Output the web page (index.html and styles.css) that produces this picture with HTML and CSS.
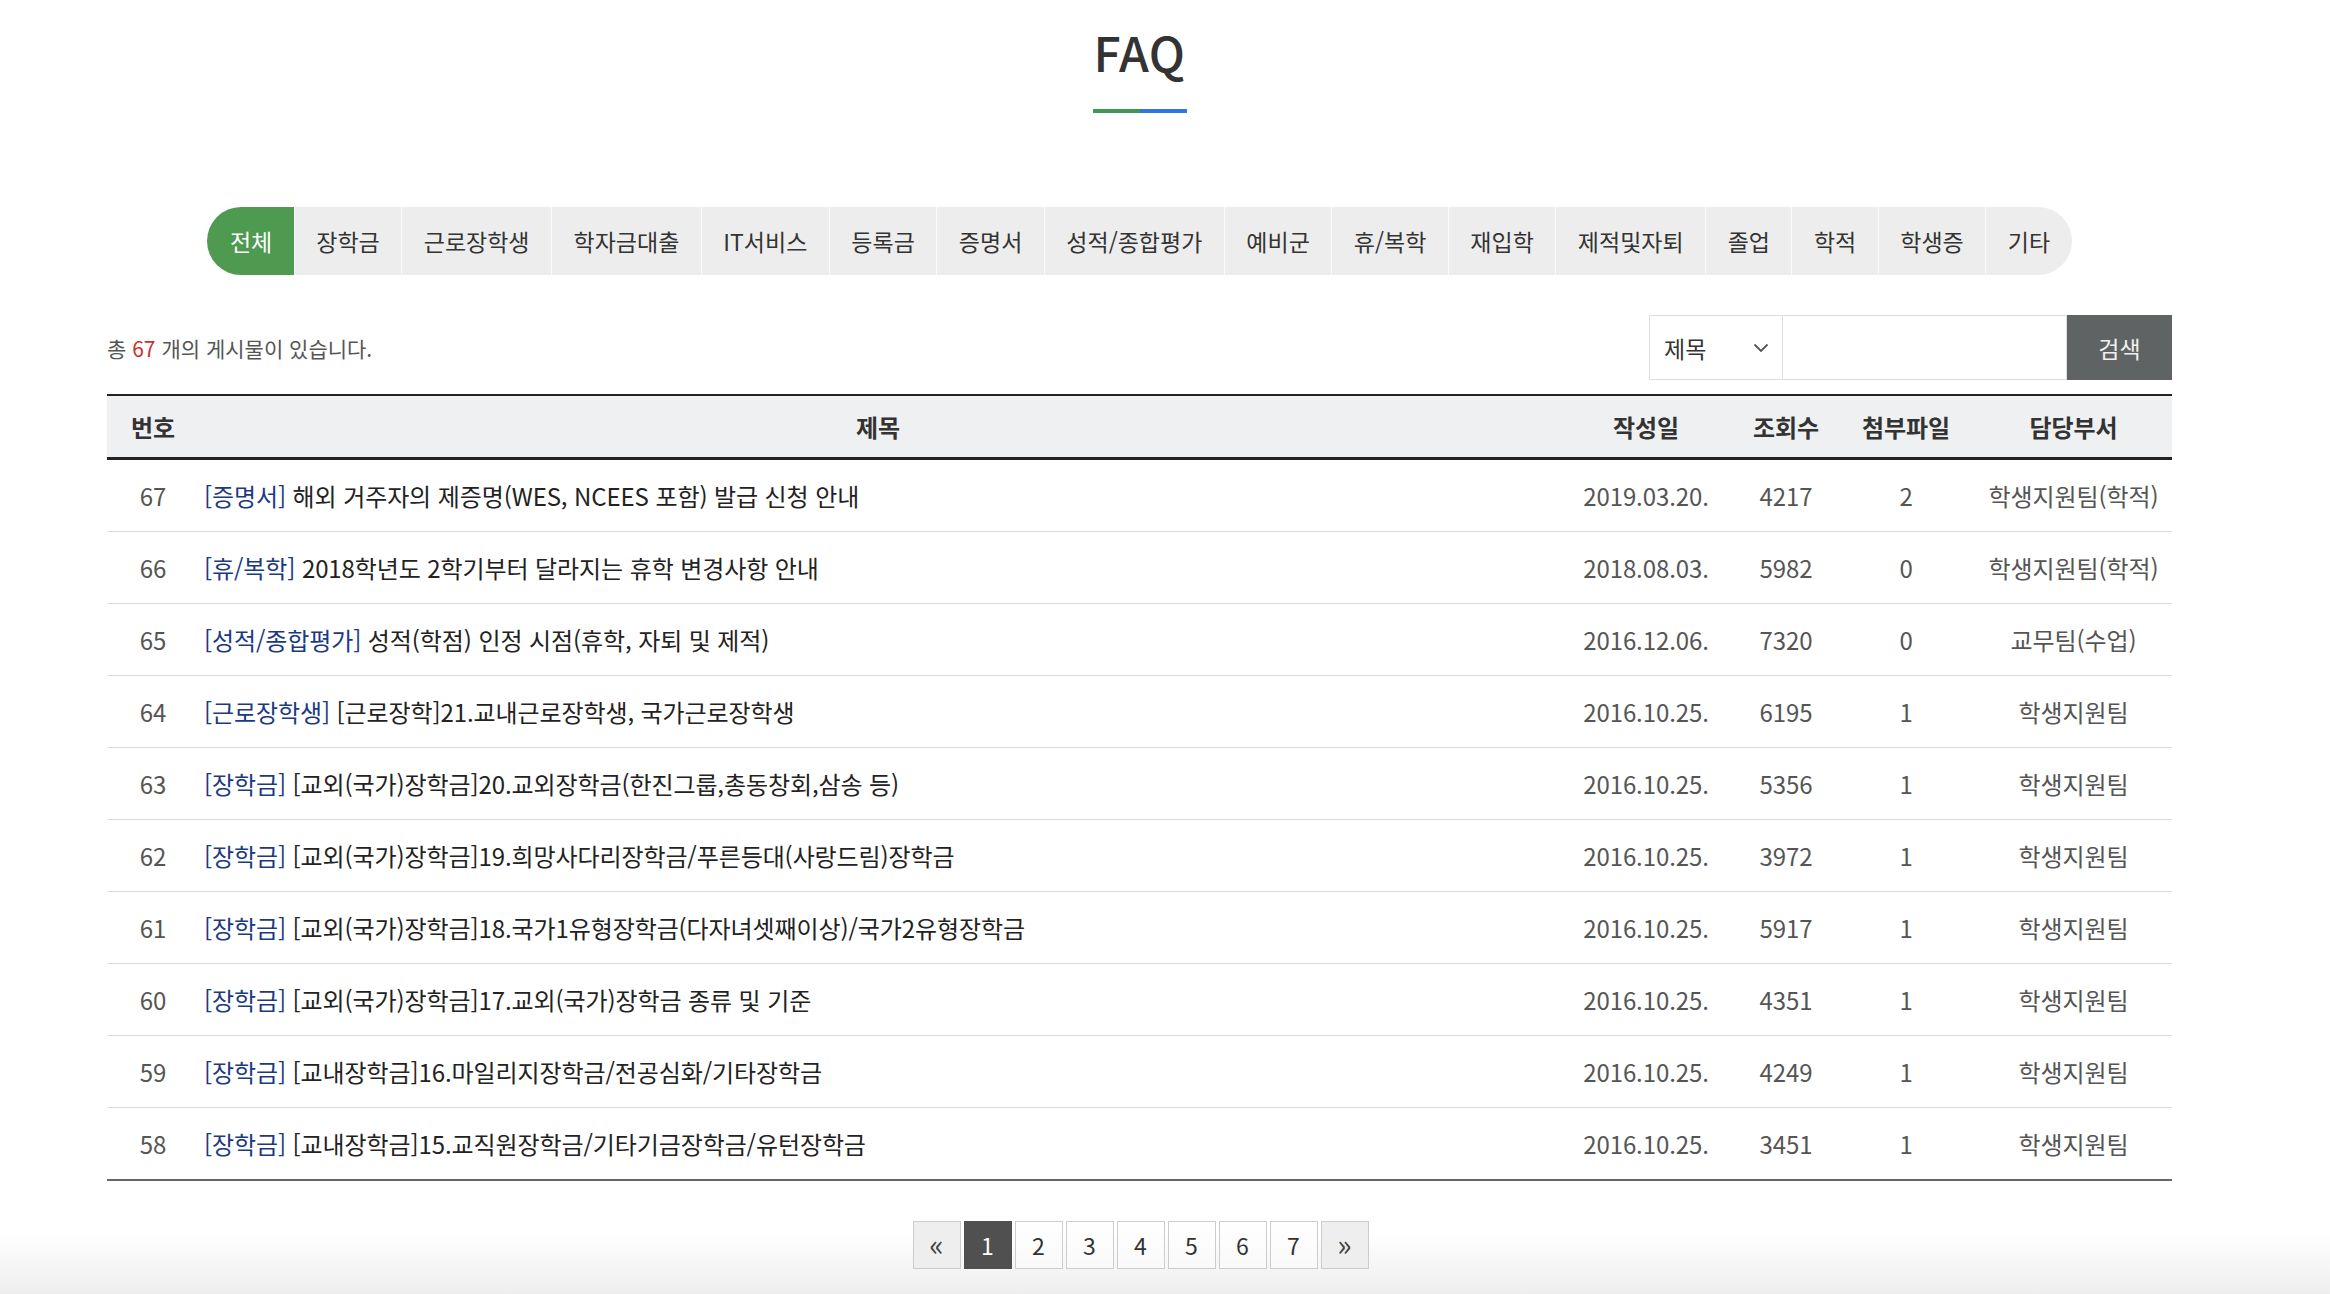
FILE: index.html
```html
<!DOCTYPE html>
<html lang="ko">
<head>
<meta charset="utf-8">
<title>FAQ</title>
<link rel="stylesheet" href="styles.css">
</head>
<body>
<div class="page">
  <header class="page-head">
    <h1 class="page-title">FAQ</h1>
    <div class="title-bar"><span class="bar-green"></span><span class="bar-blue"></span></div>
  </header>

  <nav class="tabs">
    <a class="tab active">전체</a>
    <a class="tab">장학금</a>
    <a class="tab">근로장학생</a>
    <a class="tab">학자금대출</a>
    <a class="tab">IT서비스</a>
    <a class="tab">등록금</a>
    <a class="tab">증명서</a>
    <a class="tab">성적/종합평가</a>
    <a class="tab">예비군</a>
    <a class="tab">휴/복학</a>
    <a class="tab">재입학</a>
    <a class="tab">제적및자퇴</a>
    <a class="tab">졸업</a>
    <a class="tab">학적</a>
    <a class="tab">학생증</a>
    <a class="tab">기타</a>
  </nav>

  <div class="toolbar">
    <p class="count">총 <strong>67</strong> 개의 게시물이 있습니다.</p>
    <form class="search">
      <div class="select">
        <span>제목</span>
        <svg class="chev" width="16" height="10" viewBox="0 0 16 10"><path d="M1.5 1.5 L8 8 L14.5 1.5" fill="none" stroke="#555" stroke-width="1.8"/></svg>
      </div>
      <div class="input"></div>
      <button type="button" class="btn">검색</button>
    </form>
  </div>

  <table class="board">
    <colgroup>
      <col class="c-num"><col class="c-title"><col class="c-date"><col class="c-hit"><col class="c-file"><col class="c-dept">
    </colgroup>
    <thead>
      <tr><th>번호</th><th>제목</th><th>작성일</th><th>조회수</th><th>첨부파일</th><th>담당부서</th></tr>
    </thead>
    <tbody>
      <tr><td>67</td><td class="t"><span class="cat">[증명서]</span> 해외 거주자의 제증명(WES, NCEES 포함) 발급 신청 안내</td><td>2019.03.20.</td><td>4217</td><td>2</td><td>학생지원팀(학적)</td></tr>
      <tr><td>66</td><td class="t"><span class="cat">[휴/복학]</span> 2018학년도 2학기부터 달라지는 휴학 변경사항 안내</td><td>2018.08.03.</td><td>5982</td><td>0</td><td>학생지원팀(학적)</td></tr>
      <tr><td>65</td><td class="t"><span class="cat">[성적/종합평가]</span> 성적(학점) 인정 시점(휴학, 자퇴 및 제적)</td><td>2016.12.06.</td><td>7320</td><td>0</td><td>교무팀(수업)</td></tr>
      <tr><td>64</td><td class="t"><span class="cat">[근로장학생]</span> [근로장학]21.교내근로장학생, 국가근로장학생</td><td>2016.10.25.</td><td>6195</td><td>1</td><td>학생지원팀</td></tr>
      <tr><td>63</td><td class="t"><span class="cat">[장학금]</span> [교외(국가)장학금]20.교외장학금(한진그룹,총동창회,삼송 등)</td><td>2016.10.25.</td><td>5356</td><td>1</td><td>학생지원팀</td></tr>
      <tr><td>62</td><td class="t"><span class="cat">[장학금]</span> [교외(국가)장학금]19.희망사다리장학금/푸른등대(사랑드림)장학금</td><td>2016.10.25.</td><td>3972</td><td>1</td><td>학생지원팀</td></tr>
      <tr><td>61</td><td class="t"><span class="cat">[장학금]</span> [교외(국가)장학금]18.국가1유형장학금(다자녀셋째이상)/국가2유형장학금</td><td>2016.10.25.</td><td>5917</td><td>1</td><td>학생지원팀</td></tr>
      <tr><td>60</td><td class="t"><span class="cat">[장학금]</span> [교외(국가)장학금]17.교외(국가)장학금 종류 및 기준</td><td>2016.10.25.</td><td>4351</td><td>1</td><td>학생지원팀</td></tr>
      <tr><td>59</td><td class="t"><span class="cat">[장학금]</span> [교내장학금]16.마일리지장학금/전공심화/기타장학금</td><td>2016.10.25.</td><td>4249</td><td>1</td><td>학생지원팀</td></tr>
      <tr><td>58</td><td class="t"><span class="cat">[장학금]</span> [교내장학금]15.교직원장학금/기타기금장학금/유턴장학금</td><td>2016.10.25.</td><td>3451</td><td>1</td><td>학생지원팀</td></tr>
    </tbody>
  </table>

  <nav class="pager">
    <a class="pg nav">&laquo;</a>
    <a class="pg current">1</a>
    <a class="pg">2</a>
    <a class="pg">3</a>
    <a class="pg">4</a>
    <a class="pg">5</a>
    <a class="pg">6</a>
    <a class="pg">7</a>
    <a class="pg nav">&raquo;</a>
  </nav>
</div>
</body>
</html>
```

FILE: styles.css
```css
html {
  min-height: 100%;
  background: linear-gradient(to bottom, #ffffff 0, #ffffff 1232px, #eeeeee 1294px) no-repeat;
  background-color: #eeeeee;
}
body {
  margin: 0;
  font-family: "Noto Sans CJK KR", "Noto Sans", sans-serif;
  color: #333;
}
.page {
  width: 2065px;
  margin: 0 0 0 107px;
  padding-top: 27px;
}
.page-head {
  display: flex;
  flex-direction: column;
  align-items: center;
}
.page-title {
  margin: 0;
  font-size: 48px;
  line-height: 48px;
  font-weight: 500;
  color: #333;
  letter-spacing: 0.5px;
}
.title-bar {
  display: flex;
  margin-top: 34px;
  width: 94px;
  height: 4px;
}
.bar-green { flex: 1; background: #3f9756; }
.bar-blue { flex: 1; background: #2f75e6; }

.tabs {
  display: flex;
  justify-content: center;
  margin-top: 94px;
  height: 68px;
}
.tab {
  display: flex;
  align-items: center;
  padding: 0 21.5px;
  background: #ededed;
  border-left: 1px solid #fafafa;
  font-size: 23px;
  color: #333;
  white-space: nowrap;
}
.tab:first-child {
  border-left: 0;
  border-radius: 34px 0 0 34px;
  padding-left: 22.5px;
}
.tab:last-child {
  border-radius: 0 34px 34px 0;
}
.tab.active {
  background: #4e9a51;
  color: #fff;
}

.toolbar {
  display: flex;
  align-items: center;
  justify-content: space-between;
  margin-top: 40px;
}
.count {
  margin: 0;
  font-size: 21px;
  color: #555;
}
.count strong {
  font-weight: 400;
  color: #c8322c;
}
.search {
  display: flex;
  height: 65px;
  margin: 0;
}
.select {
  display: flex;
  align-items: center;
  justify-content: space-between;
  box-sizing: border-box;
  width: 134px;
  padding: 0 13px 0 14px;
  border: 1px solid #dedede;
  font-size: 23px;
  color: #333;
}
.input {
  box-sizing: border-box;
  width: 284px;
  border: 1px solid #dedede;
  border-left: 0;
  background: #fff;
}
.btn {
  width: 105px;
  border: 0;
  background: #606363;
  color: #f0f0f0;
  font-family: inherit;
  font-size: 23px;
  padding: 0;
}

.board {
  width: 100%;
  margin-top: 14px;
  border-collapse: collapse;
  table-layout: fixed;
  font-size: 24px;
  letter-spacing: -0.1px;
}
.c-num { width: 92px; }
.c-date { width: 178px; }
.c-hit { width: 102px; }
.c-file { width: 138px; }
.c-dept { width: 197px; }
.board thead tr {
  border-top: 2px solid #222;
  border-bottom: 3px solid #222;
  background: #eff0f2;
}
.board th {
  height: 61px;
  padding: 0;
  font-weight: 700;
  color: #333;
  text-align: center;
}
.board td {
  height: 71px;
  padding: 0;
  text-align: center;
  color: #555;
  white-space: nowrap;
}
.board tbody tr {
  border-bottom: 1px solid #dddddd;
}
.board tbody tr:last-child {
  border-bottom: 2px solid #666;
}
.board td.t {
  text-align: left;
  padding-left: 5px;
  color: #222;
}
.cat {
  color: #1c3a82;
}

.pager {
  display: flex;
  justify-content: center;
  gap: 3px;
  margin-top: 40px;
  padding-left: 2px;
}
.pg {
  display: flex;
  align-items: center;
  justify-content: center;
  box-sizing: border-box;
  width: 48px;
  height: 48px;
  border: 1px solid #cccccc;
  background: linear-gradient(#ffffff, #f9f9f9);
  font-size: 23px;
  color: #333;
}
.pg.nav {
  background: #eeeeee;
  color: #444;
  font-size: 30px;
  padding-bottom: 4px;
}
.pg.current {
  background: #505050;
  border-color: #505050;
  color: #fff;
}
```
